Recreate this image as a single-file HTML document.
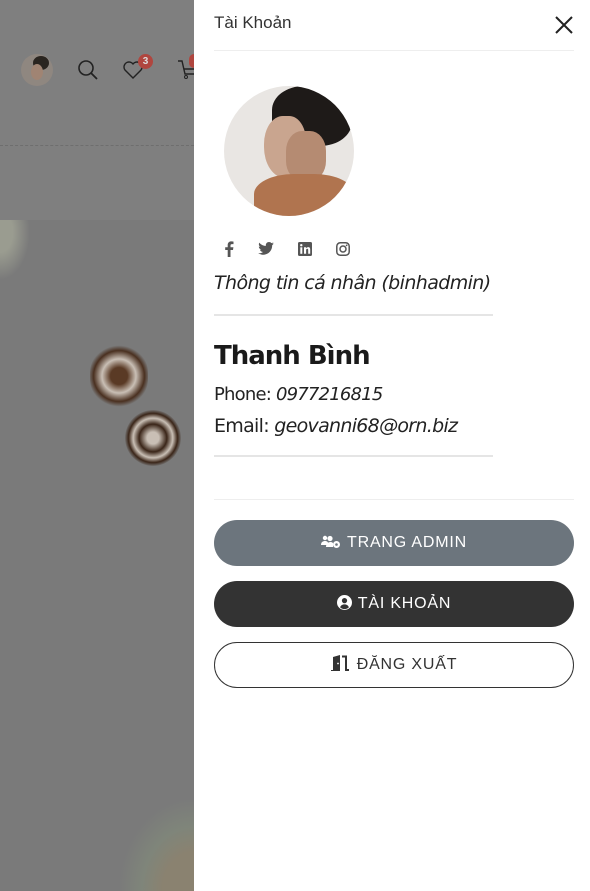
<!DOCTYPE html>
<html><head><meta charset="utf-8"><style>
*{margin:0;padding:0;box-sizing:border-box}
body{width:590px;height:891px;overflow:hidden;position:relative;font-family:"Liberation Sans",sans-serif;background:#7a7a7a}
.top{position:absolute;left:0;top:0;width:194px;height:220px;background:#7f7f7f}
.dash{position:absolute;left:0;top:145px;width:194px;border-top:1px dashed #6e6e6e}
.panel{position:absolute;left:194px;top:0;width:396px;height:891px;background:#fff}
.abs{position:absolute}
.btn{position:absolute;left:20px;width:360px;height:46px;border-radius:23px;text-align:center;line-height:46px;font-size:16px;letter-spacing:0.8px}
.btn svg{vertical-align:-2px;margin-right:6px}
</style></head><body>
<div class="top"></div><div class="dash"></div>
<div class="abs" style="left:21px;top:54px;width:32px;height:32px;border-radius:50%;background:#8f8780;overflow:hidden"><div class="abs" style="left:12px;top:2px;width:16px;height:14px;border-radius:50%;background:#2a2520"></div><div class="abs" style="left:10px;top:10px;width:12px;height:16px;border-radius:50%;background:#a08473"></div></div>
<svg class="abs" style="left:77px;top:59px" width="22" height="22" viewBox="0 0 22 22"><circle cx="9" cy="9" r="7" fill="none" stroke="#222" stroke-width="1.6"/><line x1="14" y1="14" x2="20" y2="20" stroke="#222" stroke-width="1.8"/></svg>
<svg class="abs" style="left:122px;top:60px" width="22" height="20" viewBox="0 0 22 20"><path d="M11 18 L3 10 A4.5 4.5 0 0 1 11 4 A4.5 4.5 0 0 1 19 10 Z" fill="none" stroke="#222" stroke-width="1.4"/></svg>
<div class="abs" style="left:138px;top:54px;width:15px;height:15px;border-radius:50%;background:#b0463f;color:#ddd;font-size:10px;font-weight:bold;text-align:center;line-height:15px">3</div>
<svg class="abs" style="left:177px;top:58px" width="17" height="22" viewBox="0 0 17 22"><path d="M1 3 H5 L8 16 H17 M7 11 H17" fill="none" stroke="#222" stroke-width="1.4"/><circle cx="9" cy="19" r="1.5" fill="none" stroke="#222"/></svg>
<div class="abs" style="left:189px;top:54px;width:5px;height:14px;background:#b0463f;border-radius:7px 0 0 7px"></div>
<div class="abs" style="left:90px;top:345px;width:58px;height:62px;border-radius:45%;background:radial-gradient(circle,#5a3a25 20%,#c9bfb5 40%,#4a3020 60%,#7a7a7a 72%)"></div>
<div class="abs" style="left:125px;top:410px;width:56px;height:56px;border-radius:50%;background:radial-gradient(circle,#c9bfb5 15%,#3a2518 35%,#c9bfb5 50%,#3a2518 62%,#7a7a7a 72%)"></div>
<div class="abs" style="left:0;top:220px;width:30px;height:60px;background:radial-gradient(ellipse at 0 20%,#9a9c90 30%,#7a7a7a 70%)"></div>
<div class="abs" style="left:120px;top:800px;width:74px;height:91px;background:radial-gradient(ellipse at 100% 100%,#8a8270 30%,#7f857a 50%,#7a7a7a 72%)"></div>

<div class="panel">
<div class="abs" style="left:20px;top:13px;font-size:17px;color:#333">Tài Khoản</div>
<svg class="abs" style="left:361px;top:16px" width="18" height="18" viewBox="0 0 18 18"><path d="M1 1 L17 17 M17 1 L1 17" stroke="#222" stroke-width="2"/></svg>
<div class="abs" style="left:20px;top:50px;width:360px;border-top:1px solid #eee"></div>
<div class="abs" style="left:30px;top:86px;width:130px;height:130px;border-radius:50%;overflow:hidden;background:#e9e6e3">
<div class="abs" style="left:48px;top:0;width:80px;height:60px;border-radius:40% 50% 40% 30%;background:#1e1a18"></div>
<div class="abs" style="left:40px;top:30px;width:42px;height:62px;border-radius:45% 40% 50% 50%;background:#c9a58f"></div>
<div class="abs" style="left:62px;top:45px;width:40px;height:50px;border-radius:40%;background:#b58b72"></div>
<div class="abs" style="left:30px;top:88px;width:100px;height:50px;border-radius:40% 40% 0 0;background:#b0744f"></div>
</div>
<svg class="abs" style="left:30px;top:241px" width="10" height="16" viewBox="0 0 10 16"><path d="M6.5 16 V9 H9 L9.4 6.2 H6.5 V4.5 C6.5 3.7 6.8 3.1 8 3.1 H9.5 V0.6 C9.2 0.5 8.3 0.4 7.3 0.4 C5.1 0.4 3.7 1.7 3.7 4.1 V6.2 H1.2 V9 H3.7 V16 Z" fill="#555"/></svg>
<svg class="abs" style="left:64px;top:242px" width="16" height="13" viewBox="0 0 24 20"><path d="M24 2.4c-.9.4-1.8.6-2.8.8 1-.6 1.800-1.6 2.2-2.7-1 .6-2 1-3.1 1.2C19.4.7 18.1 0 16.6 0c-2.7 0-4.9 2.2-4.9 4.9 0 .4 0 .8.1 1.1C7.7 5.8 4.1 3.9 1.7.9c-.4.7-.7 1.6-.7 2.5 0 1.7.9 3.2 2.2 4.1-.8 0-1.6-.2-2.2-.6v.1c0 2.4 1.7 4.4 3.9 4.8-.4.1-.8.2-1.3.2-.3 0-.6 0-.9-.1.6 2 2.4 3.4 4.6 3.4-1.7 1.3-3.8 2.1-6.1 2.1H0c2.2 1.4 4.8 2.2 7.5 2.2 9.1 0 14-7.5 14-14v-.6c1-.7 1.8-1.6 2.5-2.6z" fill="#555"/></svg>
<svg class="abs" style="left:104px;top:242px" width="14" height="14" viewBox="0 0 14 14"><rect width="14" height="14" rx="1.5" fill="#555"/><rect x="2.3" y="5.3" width="2" height="6.5" fill="#fff"/><circle cx="3.3" cy="3.2" r="1.2" fill="#fff"/><path d="M6 5.3h2v1c.4-.7 1.2-1.2 2.2-1.2 1.7 0 2 1.1 2 2.6v4.1h-2V8.2c0-.8-.1-1.4-.9-1.4s-1.2.6-1.2 1.4v3.6H6z" fill="#fff"/></svg>
<svg class="abs" style="left:142px;top:242px" width="14" height="14" viewBox="0 0 14 14"><rect x="0.8" y="0.8" width="12.4" height="12.4" rx="3.5" fill="none" stroke="#555" stroke-width="1.5"/><circle cx="7" cy="7" r="3" fill="none" stroke="#555" stroke-width="1.5"/><circle cx="10.6" cy="3.4" r=".9" fill="#555"/></svg>
<div class="abs" style="left:20px;top:272px;font-style:italic;color:#222;font-family:'DejaVu Sans','Liberation Sans',sans-serif;letter-spacing:-0.6px;font-size:19px">Thông tin cá nhân (binhadmin)</div>
<div class="abs" style="left:20px;top:314px;width:279px;border-top:2px solid #e5e5e5"></div>
<div class="abs" style="left:20px;top:341px;font-size:26px;font-weight:bold;color:#1a1a1a;font-family:'DejaVu Sans',sans-serif;letter-spacing:-1px">Thanh Bình</div>
<div class="abs" style="left:20px;top:384px;font-size:18px;color:#222;font-family:'DejaVu Sans',sans-serif;letter-spacing:-0.8px">Phone: <i>0977216815</i></div>
<div class="abs" style="left:20px;top:415px;font-size:19px;color:#222;font-family:'DejaVu Sans',sans-serif;letter-spacing:-0.7px">Email: <i>geovanni68@orn.biz</i></div>
<div class="abs" style="left:20px;top:455px;width:279px;border-top:2px solid #e5e5e5"></div>
<div class="abs" style="left:20px;top:499px;width:360px;border-top:1px solid #eee"></div>
<div class="btn" style="top:520px;background:#6c757d;color:#fff"><svg width="20" height="14" viewBox="0 0 20 14"><circle cx="4" cy="3" r="2.2" fill="#fff"/><circle cx="9" cy="3.5" r="2.6" fill="#fff"/><path d="M0 10c0-3 2-4 4-4s3 1 3 2v2zM5 12c0-3 2-5 4.5-5 1.5 0 2.5 1 2.5 1v4z" fill="#fff"/><circle cx="15.5" cy="9.5" r="3.5" fill="#fff"/><circle cx="15.5" cy="9.5" r="1.3" fill="#6c757d"/></svg>TRANG ADMIN</div>
<div class="btn" style="top:581px;background:#333;color:#fff"><svg width="15" height="15" viewBox="0 0 16 16"><circle cx="8" cy="8" r="8" fill="#fff"/><circle cx="8" cy="6" r="2.8" fill="#333"/><path d="M3.3 13c1-2.2 2.7-3 4.7-3s3.7.8 4.7 3a6.5 6.5 0 0 1-9.4 0z" fill="#333"/></svg>TÀI KHOẢN</div>
<div class="btn" style="top:642px;border:1px solid #333;color:#333;line-height:44px"><svg width="20" height="16" viewBox="0 0 20 16"><path d="M0 15h2V2l7-2v16H0z" fill="#333"/><path d="M11 1.5h4V15h3" fill="none" stroke="#333" stroke-width="2"/><circle cx="7" cy="8.5" r=".9" fill="#fff"/></svg>ĐĂNG XUẤT</div>
</div>
</body></html>
